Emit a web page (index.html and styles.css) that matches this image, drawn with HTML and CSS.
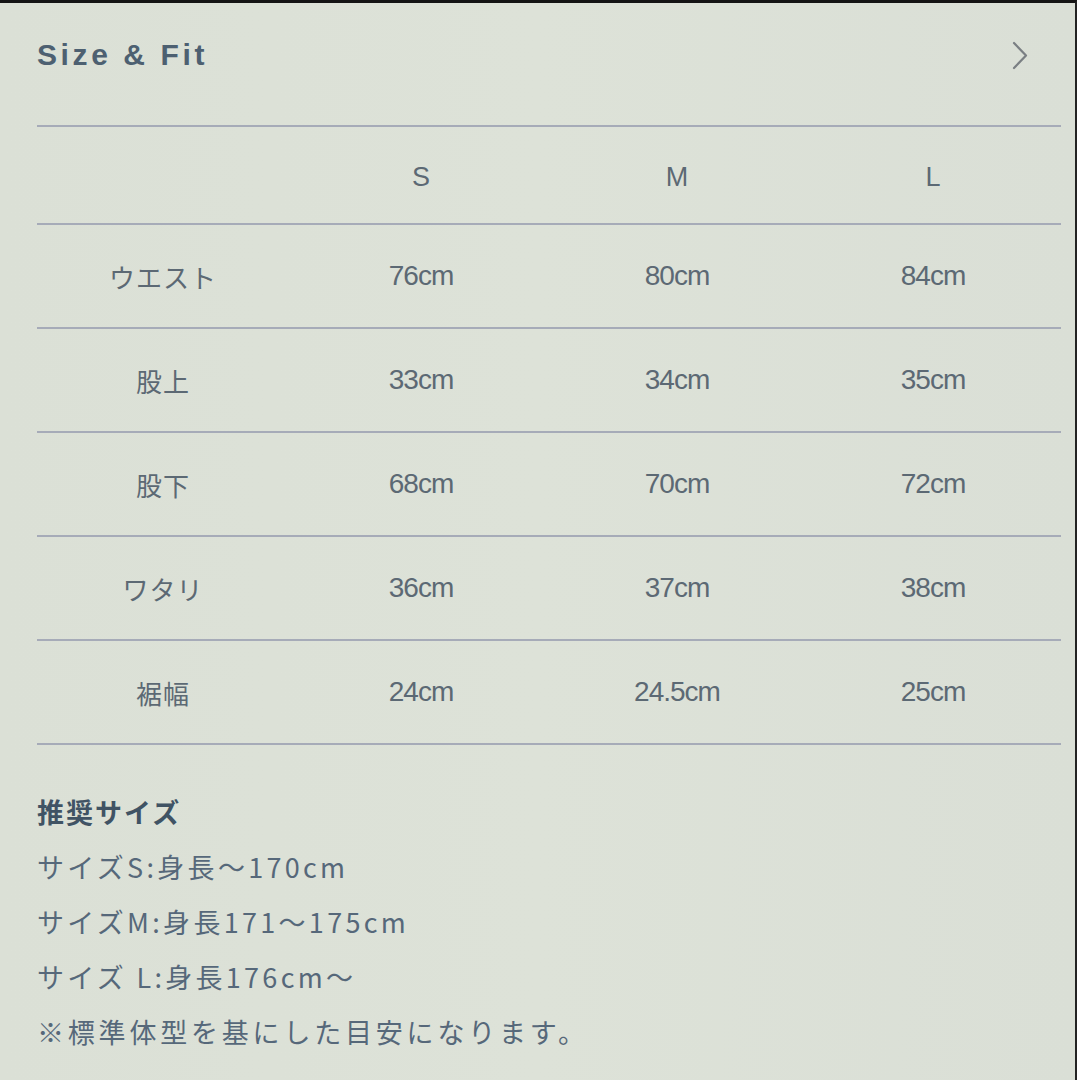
FILE: index.html
```html
<!DOCTYPE html>
<html lang="ja">
<head>
<meta charset="utf-8">
<title>Size &amp; Fit</title>
<link rel="stylesheet" href="styles.css">
</head>
<body>
<div class="page">
  <header class="head">
    <h1 class="title">Size &amp; Fit</h1>
    <svg class="chev" width="18" height="30" viewBox="0 0 18 30" aria-hidden="true">
      <polyline points="3,2 15,14.5 3,27" fill="none" stroke="#7a7f83" stroke-width="2.2" stroke-linecap="round" stroke-linejoin="round"/>
    </svg>
  </header>

  <div class="table">
    <div class="row row-head">
      <div class="cell"></div>
      <div class="cell">S</div>
      <div class="cell">M</div>
      <div class="cell">L</div>
    </div>
    <div class="row">
      <div class="cell jp">ウエスト</div>
      <div class="cell">76cm</div>
      <div class="cell">80cm</div>
      <div class="cell">84cm</div>
    </div>
    <div class="row">
      <div class="cell jp">股上</div>
      <div class="cell">33cm</div>
      <div class="cell">34cm</div>
      <div class="cell">35cm</div>
    </div>
    <div class="row">
      <div class="cell jp">股下</div>
      <div class="cell">68cm</div>
      <div class="cell">70cm</div>
      <div class="cell">72cm</div>
    </div>
    <div class="row">
      <div class="cell jp">ワタリ</div>
      <div class="cell">36cm</div>
      <div class="cell">37cm</div>
      <div class="cell">38cm</div>
    </div>
    <div class="row">
      <div class="cell jp">裾幅</div>
      <div class="cell">24cm</div>
      <div class="cell">24.5cm</div>
      <div class="cell">25cm</div>
    </div>
  </div>

  <section class="reco">
    <h2 class="reco-title">推奨サイズ</h2>
    <p class="reco-line">サイズS:身長〜170cm</p>
    <p class="reco-line">サイズM:身長171〜175cm</p>
    <p class="reco-line">サイズ L:身長176cm〜</p>
    <p class="reco-line reco-note">※標準体型を基にした目安になります。</p>
  </section>
</div>
</body>
</html>
```

FILE: styles.css
```css
* {
  box-sizing: border-box;
}

html, body {
  margin: 0;
  padding: 0;
}

body {
  background: #dce1d7;
  width: 1077px;
  height: 1080px;
  overflow: hidden;
}

.page {
  height: 1080px;
  border-top: 3px solid #141414;
  border-right: 2px solid #232323;
  padding: 0 14px 0 37px;
  background: linear-gradient(90deg, #dbe0d6 0%, #dde2d8 50%, #dadfd6 100%);
}

.head {
  display: flex;
  justify-content: space-between;
  align-items: flex-start;
  padding: 34px 32px 52px 0;
}

.title {
  margin: 0;
  font-family: "Liberation Sans", Arial, sans-serif;
  font-weight: 700;
  font-size: 30px;
  line-height: 36px;
  letter-spacing: 3.6px;
  color: #4d6071;
}

.chev {
  display: block;
  margin-top: 4px;
}

.table {
  border-top: 2px solid #a6abb8;
}

.row {
  display: grid;
  grid-template-columns: repeat(4, 1fr);
  align-items: center;
  height: 104px;
  border-bottom: 2px solid #a6abb8;
}

.row-head {
  height: 98px;
}

.cell {
  text-align: center;
  font-family: "Liberation Sans", Arial, sans-serif;
  font-size: 28px;
  letter-spacing: -1px;
  color: #5c6974;
}

.row-head .cell {
  letter-spacing: 0;
  font-size: 27px;
  padding-top: 4px;
}

.cell.jp {
  font-family: "Noto Sans CJK JP", sans-serif;
  font-size: 26px;
  letter-spacing: 1px;
  padding-right: 4px;
}

.reco {
  padding-top: 39px;
}

.reco-title {
  margin: 0;
  font-family: "Noto Sans CJK JP", sans-serif;
  font-weight: 700;
  font-size: 27px;
  line-height: 55px;
  letter-spacing: 2px;
  color: #405364;
}

.reco-line {
  margin: 0;
  font-family: "Noto Sans CJK JP", sans-serif;
  font-weight: 400;
  font-size: 27px;
  line-height: 55px;
  letter-spacing: 3.3px;
  color: #56687a;
}

.reco-note {
  letter-spacing: 3.8px;
}
```
